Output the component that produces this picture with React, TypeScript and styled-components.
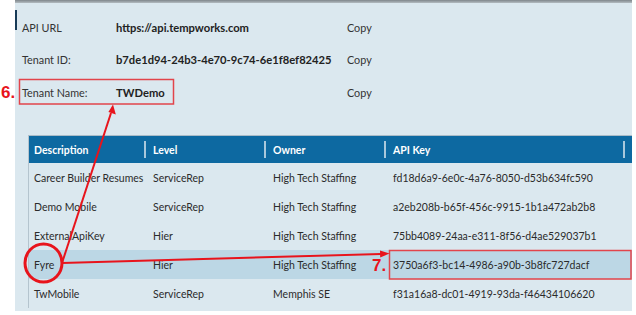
import React from 'react';
import styled, { createGlobalStyle } from 'styled-components';

const GlobalStyle = createGlobalStyle`
  body {
    margin: 0;
    background: #ffffff;
    font-family: Lato, "Open Sans", "Liberation Sans", sans-serif;
  }
`;

const Page = styled.div`
  position: relative;
  width: 636px;
  height: 315px;
  overflow: hidden;
`;

const Panel = styled.div`
  position: relative;
  margin-left: 15px;
  width: 617px;
  height: 311px;
  box-sizing: border-box;
  padding-top: 3px;
  background: linear-gradient(to bottom, #7f868b 0, #b3bcc1 3px, #dbe8ef 3px);

  &::before {
    content: '';
    position: absolute;
    left: 0;
    top: 10px;
    width: 2px;
    height: 20px;
    background: #173b57;
  }
`;

const InfoList = styled.div`
  padding: 8px 0 0 7px;
`;

const InfoRow = styled.div`
  display: grid;
  grid-template-columns: 94px 231px auto;
  align-items: center;
  height: 32.5px;
  font-size: 10.8px;
  color: #333;
`;

const Value = styled.span`
  font-size: 11.2px;
  font-weight: 700;
  color: #222;
`;

const Grid = styled.div`
  margin: 26.5px 0 0 13px;
  width: 603px;
  border-top: 1px solid #a9bbc7;
  border-left: 1px solid #b4c4ce;
  font-size: 10.5px;
`;

const Row = styled.div<{ $head?: boolean; $selected?: boolean }>`
  display: grid;
  grid-template-columns: 116px 120px 120px 239px 1fr;
  height: ${(p) => (p.$head ? '27px' : '29px')};
  align-items: center;
  background: ${(p) => (p.$head ? '#0d69a1' : p.$selected ? '#bcd7e5' : 'transparent')};
  color: ${(p) => (p.$head ? '#ffffff' : '#2b2b2b')};
  font-weight: ${(p) => (p.$head ? 700 : 400)};
`;

const Cell = styled.div<{ $divider?: boolean }>`
  position: relative;
  height: 100%;
  display: flex;
  align-items: center;
  padding-left: 8px;
  white-space: nowrap;
  overflow: visible;

  &:first-child {
    padding-left: 5px;
  }

  ${(p) =>
    p.$divider &&
    `
    &::before {
      content: '';
      position: absolute;
      left: -1px;
      top: 5px;
      bottom: 5px;
      width: 2px;
      background: rgba(220, 232, 240, 0.75);
    }
  `}
`;

const Overlay = styled.svg`
  position: absolute;
  left: 0;
  top: 0;
  pointer-events: none;
`;

const StepLabel = styled.span<{ $x: number; $y: number }>`
  position: absolute;
  left: ${(p) => p.$x}px;
  top: ${(p) => p.$y}px;
  font-family: "Liberation Sans", Arial, sans-serif;
  font-weight: 700;
  font-size: 17px;
  line-height: 17px;
  color: #e8141c;
`;

const info = [
  { label: 'API URL', value: 'https://api.tempworks.com' },
  { label: 'Tenant ID:', value: 'b7de1d94-24b3-4e70-9c74-6e1f8ef82425' },
  { label: 'Tenant Name:', value: 'TWDemo' },
];

const keys = [
  { desc: 'Career Builder Resumes', level: 'ServiceRep', owner: 'High Tech Staffing', key: 'fd18d6a9-6e0c-4a76-8050-d53b634fc590' },
  { desc: 'Demo Mobile', level: 'ServiceRep', owner: 'High Tech Staffing', key: 'a2eb208b-b65f-456c-9915-1b1a472ab2b8' },
  { desc: 'ExternalApiKey', level: 'Hier', owner: 'High Tech Staffing', key: '75bb4089-24aa-e311-8f56-d4ae529037b1' },
  { desc: 'Fyre', level: 'Hier', owner: 'High Tech Staffing', key: '3750a6f3-bc14-4986-a90b-3b8fc727dacf', selected: true },
  { desc: 'TwMobile', level: 'ServiceRep', owner: 'Memphis SE', key: 'f31a16a8-dc01-4919-93da-f46434106620' },
];

const RED = '#e8141c';

const App = () => {
  return (
    <Page>
      <GlobalStyle />
      <Panel>
        <InfoList>
          {info.map((row) => (
            <InfoRow key={row.label}>
              <span>{row.label}</span>
              <Value>{row.value}</Value>
              <span>Copy</span>
            </InfoRow>
          ))}
        </InfoList>

        <Grid>
          <Row $head>
            <Cell>Description</Cell>
            <Cell $divider>Level</Cell>
            <Cell $divider>Owner</Cell>
            <Cell $divider>API Key</Cell>
            <Cell $divider />
          </Row>
          {keys.map((k) => (
            <Row key={k.desc} $selected={k.selected}>
              <Cell>{k.desc}</Cell>
              <Cell>{k.level}</Cell>
              <Cell>{k.owner}</Cell>
              <Cell>{k.key}</Cell>
              <Cell />
            </Row>
          ))}
        </Grid>
      </Panel>

      {/* annotations drawn over the screenshot */}
      <Overlay width="636" height="315" viewBox="0 0 636 315">
        <rect x="19.5" y="79.5" width="154" height="24.5" fill="none" stroke="#e2444b" strokeWidth="1.5" />
        <rect x="389.5" y="250.5" width="241.5" height="28.5" fill="none" stroke="#e2444b" strokeWidth="1.5" />
        <ellipse cx="43.5" cy="263" rx="18.5" ry="19" fill="none" stroke={RED} strokeWidth="3" />
        <line x1="62" y1="263" x2="111" y2="113" stroke={RED} strokeWidth="2" />
        <polygon points="113,104.5 115.8,114.5 108.4,112" fill={RED} />
        <line x1="62" y1="263" x2="381" y2="254" stroke={RED} strokeWidth="2" />
        <polygon points="389.5,253.6 380.2,257.4 380,250.4" fill={RED} />
      </Overlay>
      <StepLabel $x={1} $y={84}>6.</StepLabel>
      <StepLabel $x={372} $y={257}>7.</StepLabel>
    </Page>
  );
};

export default App;
